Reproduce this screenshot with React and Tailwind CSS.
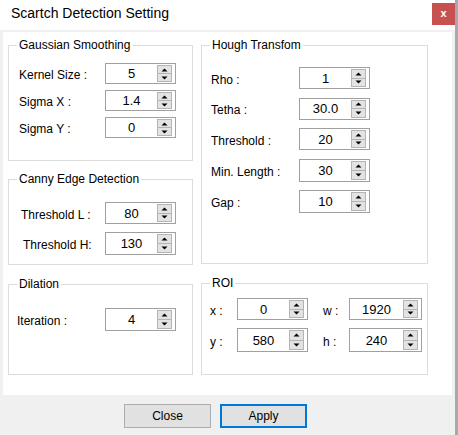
import React from 'react';

// WinForms-style "Scartch Detection Setting" dialog

function Arrow({ down }) {
  return (
    <svg width="7" height="4" viewBox="0 0 7 4" className="block">
      {down ? <polygon points="0.5,0.5 6.5,0.5 3.5,3.5" fill="#000" /> : <polygon points="0.5,3.5 6.5,3.5 3.5,0.5" fill="#000" />}
    </svg>
  );
}

function Spin({ value, w = 'w-[71px]', h = 'h-[21px]' }) {
  return (
    <div className={`flex shrink-0 ${w} ${h} border border-[#a0a0a0] bg-white`}>
      <div className="flex flex-1 items-center justify-center text-[13px] leading-none text-black">{value}</div>
      <div className="my-[1px] mr-[3px] flex w-[15px] flex-col">
        <div className="flex flex-1 items-center justify-center border border-[#b4b4b4] bg-[#e3e3e3]">
          <Arrow />
        </div>
        <div className="-mt-px flex flex-1 items-center justify-center border border-[#b4b4b4] bg-[#e3e3e3]">
          <Arrow down />
        </div>
      </div>
    </div>
  );
}

function Group({ title, className, children }) {
  return (
    <fieldset className={`border border-[#dcdcdc] ${className}`}>
      <legend className="ml-[8px] px-[2px] text-[12px] leading-[14px] text-black">{title}</legend>
      {children}
    </fieldset>
  );
}

function Row({ label, value, labelW = 'w-[86px]', h = 'h-[21px]', w, indent = '' }) {
  return (
    <div className="flex items-center">
      <div className={`shrink-0 ${labelW} ${indent} pt-[3px] text-[12px] leading-none text-black`}>{label}</div>
      <Spin value={value} h={h} w={w} />
    </div>
  );
}

export default function App() {
  return (
    <div className="flex h-[435px] w-[458px] font-['Liberation_Sans',Arial,sans-serif]">
      <div className="flex flex-1 flex-col bg-[#f0f0f0]">
        {/* title bar */}
        <div className="flex h-[30px] items-start justify-between bg-white">
          <div className="pl-[11px] pt-[5px] text-[14px] leading-[16px] text-black">Scartch Detection Setting</div>
          <div className="mt-[3px] flex h-[22px] w-[23px] items-center justify-center bg-[#c75050] pb-[2px] text-[11px] font-bold text-white">
            x
          </div>
        </div>

        {/* content panel */}
        <div className="mt-[2px] mr-[3px] ml-[3px] flex h-[363px] gap-[8px] bg-white pt-[6px] pl-[5px]">
          <div className="flex w-[185px] flex-col">
            <Group title="Gaussian Smoothing" className="h-[123px]">
              <div className="flex flex-col gap-[6px] pt-[11px] pl-[10px]">
                <Row label="Kernel Size :" value="5" />
                <Row label="Sigma X :" value="1.4" />
                <Row label="Sigma Y :" value="0" />
              </div>
            </Group>
            <Group title="Canny Edge Detection" className="mt-[11px] h-[93px]">
              <div className="flex flex-col gap-[8px] pt-[16px] pl-[10px]">
                <Row label="Threshold L :" value="80" h="h-[22px]" labelW="w-[84px]" indent="ml-[2px]" />
                <Row label="Threshold H:" value="130" h="h-[23px]" labelW="w-[82px]" indent="ml-[4px]" />
              </div>
            </Group>
            <Group title="Dilation" className="mt-[12px] h-[98px]">
              <div className="flex flex-col pt-[17px] pl-[8px]">
                <Row label="Iteration :" value="4" h="h-[23px]" labelW="w-[88px]" />
              </div>
            </Group>
          </div>

          <div className="flex w-[227px] flex-col">
            <Group title="Hough Transfom" className="h-[226px]">
              <div className="flex flex-col gap-[8.5px] pt-[15px] pl-[9px]">
                <Row label="Rho :" value="1" h="h-[22px]" labelW="w-[88px]" />
                <Row label="Tetha :" value="30.0" h="h-[22px]" labelW="w-[88px]" />
                <Row label="Threshold :" value="20" h="h-[22px]" labelW="w-[88px]" />
                <Row label="Min. Length :" value="30" h="h-[23px]" labelW="w-[88px]" />
                <Row label="Gap :" value="10" h="h-[23px]" labelW="w-[88px]" />
              </div>
            </Group>
            <Group title="ROI" className="mt-[12px] h-[99px]">
              <div className="grid grid-cols-[113px_99px] gap-y-[8px] pt-[8px] pl-[8px]">
                <Row label="x :" value="0" h="h-[22px]" labelW="w-[27px]" />
                <Row label="w :" value="1920" h="h-[22px]" w="w-[73px]" labelW="w-[26px]" />
                <Row label="y :" value="580" h="h-[24px]" labelW="w-[27px]" />
                <Row label="h :" value="240" h="h-[24px]" w="w-[73px]" labelW="w-[26px]" />
              </div>
            </Group>
          </div>
        </div>

        {/* buttons */}
        <div className="flex gap-[9px] pt-[9px] pl-[124px]">
          <button className="flex h-[24px] w-[87px] items-center justify-center border border-[#adadad] bg-[#e1e1e1] text-[12px] text-black">
            Close
          </button>
          <button className="flex h-[24px] w-[87px] items-center justify-center border-2 border-[#0078d7] bg-[#e1e1e1] text-[12px] text-black">
            Apply
          </button>
        </div>
      </div>
      <div className="w-[3px] bg-[#a9a9a9]" />
    </div>
  );
}
